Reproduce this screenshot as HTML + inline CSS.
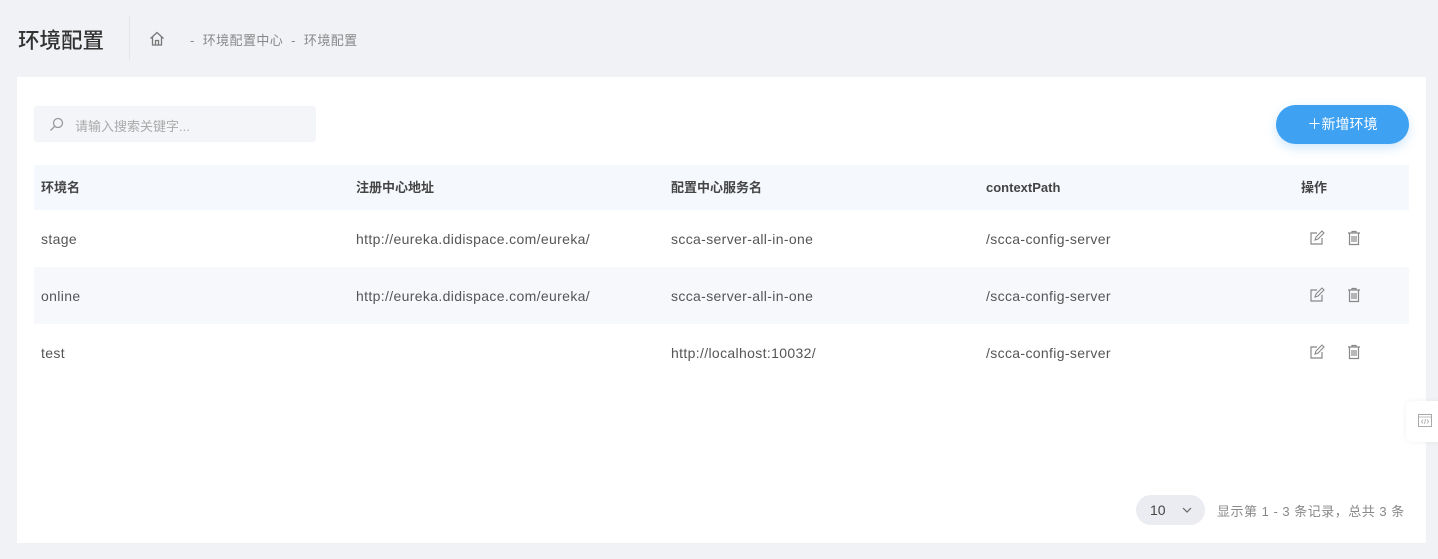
<!DOCTYPE html>
<html><head><meta charset="utf-8"><style>
*{box-sizing:border-box;margin:0;padding:0}
body{width:1438px;height:559px;background:#f0f2f5;font-family:"Liberation Sans","Noto Sans CJK SC",sans-serif;position:relative;overflow:hidden;color:#555}
.abs{position:absolute}
.title{left:18px;top:24px;font-size:21.5px;color:#333;font-weight:500}
.sep{left:129px;top:16px;width:1px;height:44px;background:#e3e5e9}
.bc{left:190px;top:30px;font-size:13px;color:#888;letter-spacing:.4px}
.card{left:17px;top:77px;width:1409px;height:466px;background:#fff}
.search{left:34px;top:106px;width:282px;height:36px;background:#f3f5f8;border-radius:3px}
.search span{position:absolute;left:41px;top:10px;font-size:13px;color:#aaa}
.btn{left:1276px;top:105px;width:133px;height:39px;background:#3ea1f1;border-radius:20px;color:#fff;font-size:14px;text-align:center;line-height:39px;box-shadow:0 4px 10px rgba(62,161,241,.25)}
.th{left:34px;top:165px;width:1375px;height:45px;background:#f5f8fc}
.row2{left:34px;top:267px;width:1375px;height:57px;background:#f6f8fb}
.t{position:absolute;font-size:14px;color:#555;line-height:18px;height:18px;letter-spacing:.35px}
.h{font-weight:bold;color:#444;font-size:13px;top:179px;letter-spacing:0}
.sel{left:1136px;top:495px;width:69px;height:30px;background:#ebecf1;border-radius:15px;font-size:14px;color:#444;line-height:30px;padding-left:14px}
.pg{left:1217px;top:501px;font-size:13px;color:#888;letter-spacing:.5px}
.fl{left:1406px;top:401px;width:40px;height:41px;background:#fff;border-radius:6px;box-shadow:0 0 6px rgba(0,0,0,.06)}
</style></head><body>
<div class="abs title">环境配置</div>
<div class="abs sep"></div>
<svg class="abs" style="left:149px;top:31px" width="16" height="15" viewBox="0 0 16 15"><path d="M1.5 7.5L8 1.5l6.5 6M3.5 6v8h9V6M6.5 14V9.5h3V14" fill="none" stroke="#777" stroke-width="1.3"/></svg>
<div class="abs bc">-&nbsp; 环境配置中心 &nbsp;-&nbsp; 环境配置</div>
<div class="abs card"></div>
<div class="abs search"><svg style="position:absolute;left:15px;top:11px" width="15" height="15" viewBox="0 0 15 15"><circle cx="9" cy="6" r="4.5" fill="none" stroke="#999" stroke-width="1.3"/><path d="M5.8 9.2L1.5 13.5" stroke="#999" stroke-width="1.3"/></svg><span>请输入搜索关键字...</span></div>
<div class="abs btn">＋新增环境</div>
<div class="abs th"></div>
<div class="abs row2"></div>
<div class="t h" style="left:41px">环境名</div>
<div class="t h" style="left:356px">注册中心地址</div>
<div class="t h" style="left:671px">配置中心服务名</div>
<div class="t h" style="left:986px">contextPath</div>
<div class="t h" style="left:1301px">操作</div>

<div class="t" style="left:41px;top:230px">stage</div>
<div class="t" style="left:356px;top:230px">http://eureka.didispace.com/eureka/</div>
<div class="t" style="left:671px;top:230px">scca-server-all-in-one</div>
<div class="t" style="left:986px;top:230px">/scca-config-server</div>
<div class="t" style="left:41px;top:287px">online</div>
<div class="t" style="left:356px;top:287px">http://eureka.didispace.com/eureka/</div>
<div class="t" style="left:671px;top:287px">scca-server-all-in-one</div>
<div class="t" style="left:986px;top:287px">/scca-config-server</div>
<div class="t" style="left:41px;top:344px">test</div>
<div class="t" style="left:671px;top:344px">http://localhost:10032/</div>
<div class="t" style="left:986px;top:344px">/scca-config-server</div>

<svg class="abs" style="left:1309px;top:230px" width="16" height="16" viewBox="0 0 16 16"><path d="M8 3H2v11h11V8" fill="none" stroke="#888" stroke-width="1.2"/><path d="M6 10l1-3 6-6 2 2-6 6z" fill="none" stroke="#888" stroke-width="1.1"/></svg>
<svg class="abs" style="left:1347px;top:230px" width="14" height="16" viewBox="0 0 14 16"><path d="M1 3h12M5 3V1.5h4V3M2.5 3.5v11h9v-11M5 6v6M7 6v6M9 6v6" fill="none" stroke="#888" stroke-width="1.2"/></svg>
<svg class="abs" style="left:1309px;top:287px" width="16" height="16" viewBox="0 0 16 16"><path d="M8 3H2v11h11V8" fill="none" stroke="#888" stroke-width="1.2"/><path d="M6 10l1-3 6-6 2 2-6 6z" fill="none" stroke="#888" stroke-width="1.1"/></svg>
<svg class="abs" style="left:1347px;top:287px" width="14" height="16" viewBox="0 0 14 16"><path d="M1 3h12M5 3V1.5h4V3M2.5 3.5v11h9v-11M5 6v6M7 6v6M9 6v6" fill="none" stroke="#888" stroke-width="1.2"/></svg>
<svg class="abs" style="left:1309px;top:344px" width="16" height="16" viewBox="0 0 16 16"><path d="M8 3H2v11h11V8" fill="none" stroke="#888" stroke-width="1.2"/><path d="M6 10l1-3 6-6 2 2-6 6z" fill="none" stroke="#888" stroke-width="1.1"/></svg>
<svg class="abs" style="left:1347px;top:344px" width="14" height="16" viewBox="0 0 14 16"><path d="M1 3h12M5 3V1.5h4V3M2.5 3.5v11h9v-11M5 6v6M7 6v6M9 6v6" fill="none" stroke="#888" stroke-width="1.2"/></svg>

<div class="abs sel">10<svg style="position:absolute;left:46px;top:12px" width="10" height="7" viewBox="0 0 10 7"><path d="M1 1l4 4 4-4" fill="none" stroke="#666" stroke-width="1.2"/></svg></div>
<div class="abs pg">显示第 1 - 3 条记录，总共 3 条</div>
<div class="abs fl"><svg style="position:absolute;left:12px;top:13px" width="14" height="13" viewBox="0 0 14 13"><rect x="0.5" y="0.5" width="13" height="12" fill="none" stroke="#aaa"/><path d="M0.5 3h13M5 5.5L3.5 7.5 5 9.5M9 5.5l1.5 2L9 9.5M7.5 5l-1 5" fill="none" stroke="#aaa" stroke-width=".8"/></svg></div>
</body></html>
